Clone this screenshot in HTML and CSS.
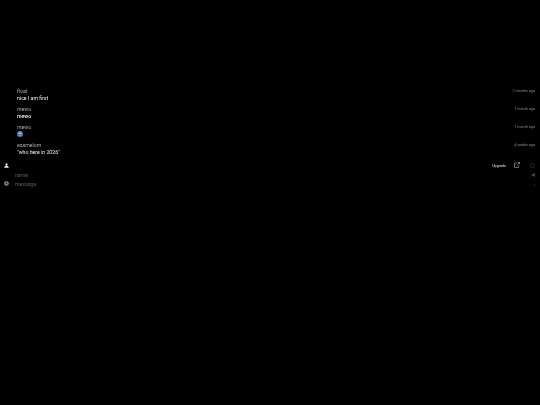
FILE: index.html
```html
<!DOCTYPE html>
<html lang="en">
<head>
<meta charset="utf-8">
<title>Comments</title>
<link rel="stylesheet" href="styles.css">
</head>
<body>
<main class="chat">
  <ul class="comments">
    <li class="comment"><div class="meta"><span class="author">float</span><span class="time">2 months ago</span></div><div class="text">nice I am first</div></li>
    <li class="comment"><div class="meta"><span class="author">mewo</span><span class="time">1 month ago</span></div><div class="text bold">mewo</div></li>
    <li class="comment"><div class="meta"><span class="author">mewo</span><span class="time">1 month ago</span></div><div class="text"><svg class="emoji" viewBox="0 0 10 10"><circle cx="5" cy="5" r="5" fill="#3f86b5"/><circle cx="5" cy="5" r="2.6" fill="#a9d3e6"/><rect x="2.5" y="5" width="5" height="1.6" fill="#2a5f86"/></svg></div></li>
    <li class="comment"><div class="meta"><span class="author">examelom</span><span class="time">4 weeks ago</span></div><div class="text">"who here in 2026"</div></li>
  </ul>
  <div class="toolbar">
    <svg class="user" viewBox="0 0 6 6"><circle cx="3" cy="1.7" r="1.3" fill="#eee"/><path d="M0.2 5.8 Q0.8 3 3 3 Q5.2 3 5.8 5.8Z" fill="#eee"/></svg>
    <span class="upgrade">Upgrade</span>
    <svg class="external" viewBox="0 0 8 8" fill="none" stroke="#bbb" stroke-width="0.8"><path d="M3.5 1.5H0.6V7.2H6.2V4.5"/><path d="M3.5 4.3 7.2 0.7M5 0.6H7.4V3"/></svg>
    <svg class="ring" viewBox="0 0 6 6" fill="none" stroke="#444" stroke-width="0.7"><circle cx="3" cy="3" r="2.4"/></svg>
  </div>
  <form class="compose">
    <svg class="smile" viewBox="0 0 6 6"><circle cx="3" cy="3" r="2.8" fill="#8a8a8a"/><circle cx="3" cy="3" r="1.1" fill="#222"/></svg>
    <div class="fields">
      <div class="field"><span class="placeholder">name</span><svg class="send" viewBox="0 0 5 5"><path d="M0 2.5 5 0V5Z" fill="#4a4a4a"/></svg></div>
      <div class="field"><span class="placeholder">message</span><span class="more">›</span></div>
    </div>
  </form>
</main>
</body>
</html>
```
FILE: styles.css
```css
html, body {
  margin: 0;
  height: 100%;
  background: #000;
  font-family: Roboto, "Liberation Sans", sans-serif;
  overflow: hidden;
}
.chat {
  padding-top: 87px;
  filter: blur(0.25px);
}
.comments {
  list-style: none;
  margin: 0;
  padding: 0 5px 0 17px;
}
.comment {
  height: 18px;
}
.meta {
  display: flex;
  justify-content: space-between;
  align-items: center;
  height: 7px;
}
.author {
  font-size: 5.2px;
  color: #a8a8a8;
}
.time {
  font-size: 3.7px;
  color: #8c8c8c;
}
.text {
  font-size: 5.2px;
  line-height: 9px;
  color: #eee;
}
.bold {
  font-weight: 500;
}
.emoji {
  display: block;
  width: 6px;
  height: 6px;
  margin-top: 1px;
}
.toolbar {
  display: flex;
  align-items: center;
  height: 8px;
  margin-top: 2px;
  padding: 0 5px 0 4px;
}
.user {
  width: 5px;
  height: 5px;
}
.upgrade {
  margin-left: auto;
  margin-top: 1px;
  font-size: 3.7px;
  font-weight: 500;
  color: #c0c0c0;
}
.external {
  width: 6px;
  height: 6px;
  margin-left: 8px;
  margin-bottom: 1px;
}
.ring {
  width: 5px;
  height: 5px;
  margin-left: 10px;
}
.compose {
  display: flex;
  align-items: flex-end;
  margin-top: 1px;
  padding: 0 5px 0 4px;
}
.smile {
  width: 5px;
  height: 5px;
  margin-bottom: 2px;
}
.fields {
  flex: 1;
  margin-left: 6px;
}
.field {
  display: flex;
  justify-content: space-between;
  align-items: center;
  height: 9px;
}
.placeholder {
  font-size: 5.2px;
  color: #5c5c5c;
}
.send {
  width: 4px;
  height: 4px;
}
.more {
  font-size: 5px;
  color: #666;
}
```
